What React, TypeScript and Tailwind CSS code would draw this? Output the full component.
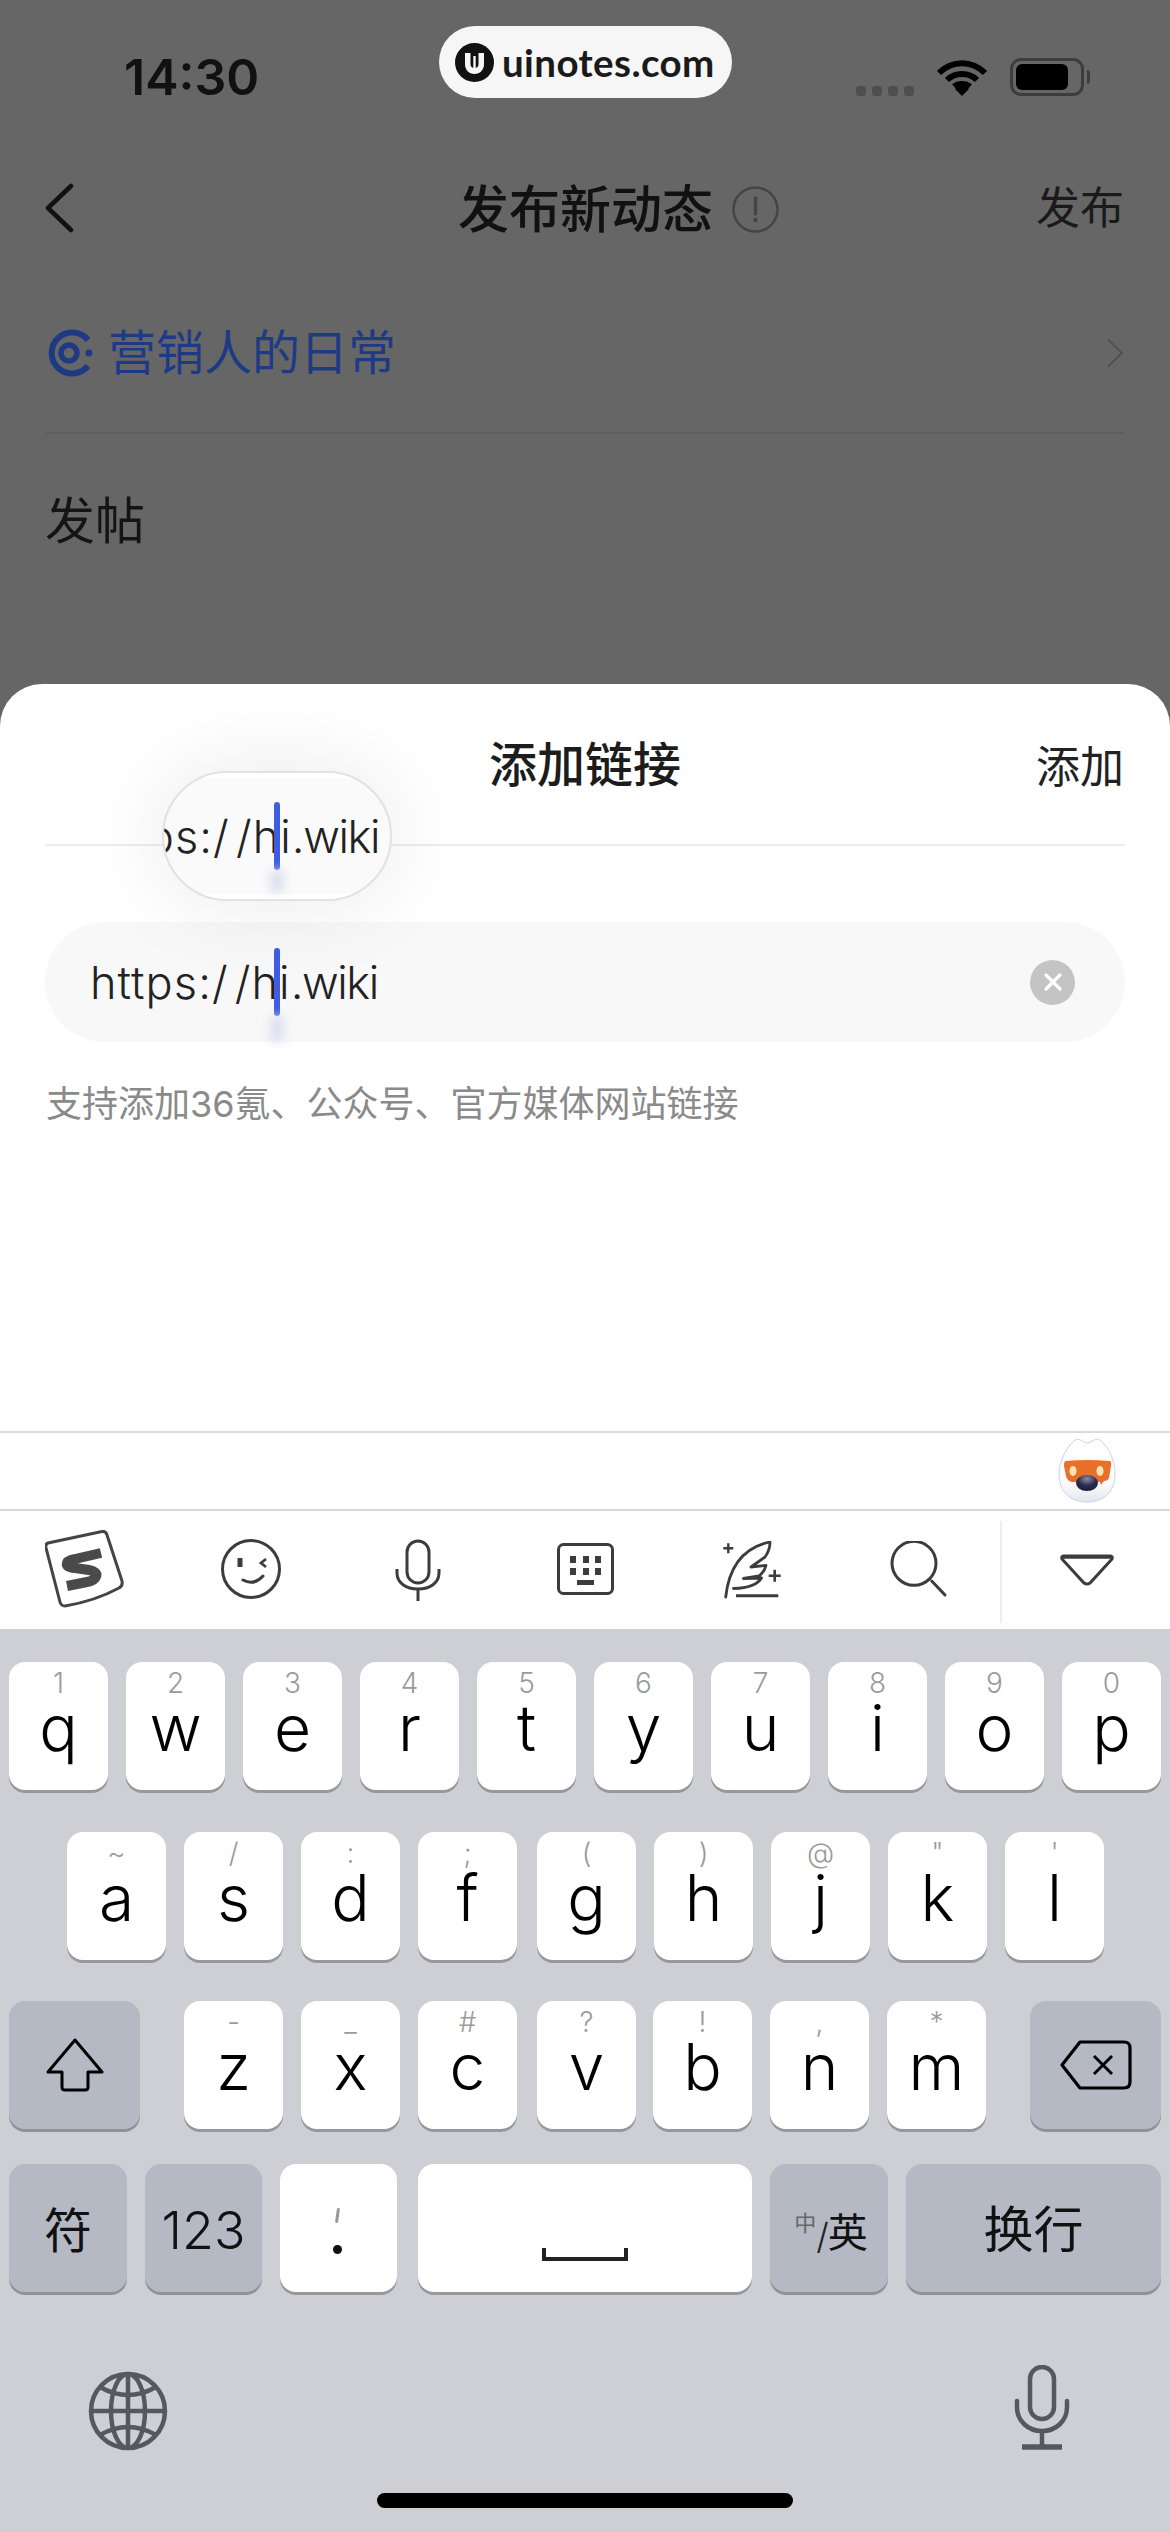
import React from "react";

const CJK = "font-['Inter','Noto_Sans_CJK_SC',sans-serif]";

function Key({ sub, label, className = "" }: { sub?: string; label: string; className?: string }) {
  return (
    <div className={`w-[99px] h-[128px] shrink-0 rounded-[16px] bg-white shadow-[0_3px_0_#96989e] flex flex-col items-center ${className}`}>
      <div className="h-[40px] mt-[1px] leading-[40px] text-[28px] font-light text-[#9a9a9a]">{sub}</div>
      <div className="h-[72px] -mt-[11px] leading-[72px] text-[64px] font-light text-black">{label}</div>
    </div>
  );
}

function GrayKey({ children, className = "" }: { children: React.ReactNode; className?: string }) {
  return (
    <div className={`h-[128px] shrink-0 rounded-[16px] bg-[#b5b9c3] shadow-[0_3px_0_#909298] flex items-center justify-center text-[#111] ${className}`}>
      {children}
    </div>
  );
}

function UrlText() {
  return (
    <span className="text-[45px] font-light leading-none text-[#222] whitespace-pre">
      <span className="tracking-[1.1px]">https:/</span>
      <span className="tracking-[1.1px] ml-[6px]">/hi</span>
      <span className="tracking-[-1.4px]">.wiki</span>
    </span>
  );
}

function Mascot() {
  return (
    <svg width="60" height="68" viewBox="0 0 60 68">
      <defs>
        <radialGradient id="nose" cx="50%" cy="25%" r="75%">
          <stop offset="0%" stopColor="#8a8ea6" />
          <stop offset="55%" stopColor="#2b2d4d" />
          <stop offset="100%" stopColor="#1c1d38" />
        </radialGradient>
        <linearGradient id="body" x1="0" y1="0" x2="0" y2="1">
          <stop offset="0%" stopColor="#ffffff" />
          <stop offset="70%" stopColor="#fbfbfd" />
          <stop offset="100%" stopColor="#e4e6ee" />
        </linearGradient>
      </defs>
      <path d="M19 1 C23 1 26 5 29 5 C33 5 36 1 40 1 C50 6 58 24 57 36 C57 54 46 64 29 64 C12 64 1 54 1 36 C1 24 9 6 19 1Z" fill="url(#body)" stroke="#cfd2e2" strokeWidth="1" />
      <path d="M8 23 Q29 21 51 23 Q54 23 53 28 L51 40 Q50 43 46 43 L43 47 L42 44 L14 44 Q9 43 8 38 L6 28 Q6 23 8 23Z" fill="#e8702a" />
      <ellipse cx="15" cy="33" rx="3.5" ry="5" fill="#fde6b0" />
      <ellipse cx="42" cy="33" rx="3.5" ry="5" fill="#fde6b0" />
      <ellipse cx="29" cy="45" rx="11" ry="8" fill="url(#nose)" />
    </svg>
  );
}

export default function App() {
  return (
    <div className={`relative w-[1170px] h-[2532px] overflow-hidden flex flex-col bg-[#666666] ${CJK}`}>
      {/* dimmed page */}
      <div className="h-[684px] shrink-0 flex flex-col">
        {/* status bar */}
        <div className="relative h-[150px] shrink-0">
          <div className="absolute left-[124px] top-[50px] text-[50px] leading-[54px] font-semibold text-[#111]">14:30</div>
          <div className="absolute left-[439px] top-[26px] w-[293px] h-[72px] rounded-[36px] bg-[#f6f6f6] flex items-center pl-[16px]">
            <svg width="39" height="39" viewBox="0 0 39 39" className="shrink-0">
              <circle cx="19.5" cy="19.5" r="19.5" fill="#111" />
              <path d="M10 10 H15.5 V21 Q15.5 25 19.5 25 Q23.5 25 23.5 21 V10 H29 V21 C29 27 25 31 19.5 31 C14 31 10 27 10 21Z" fill="#f6f6f6" />
              <path d="M18.3 13 H20.7 V26 H18.3Z" fill="#f6f6f6" />
            </svg>
            <span className="ml-[8px] text-[38.5px] leading-none font-bold text-[#1a1a1a] font-['Lato',sans-serif] tracking-[0.4px]">uinotes.com</span>
          </div>
          <div className="absolute left-[856px] top-[86px] flex gap-[6px]">
            {[0, 1, 2, 3].map((i) => (
              <div key={i} className="w-[10px] h-[10px] rounded-[3px] bg-[#4e4e4e]" />
            ))}
          </div>
          <svg className="absolute left-[937px] top-[59px]" width="50" height="37" viewBox="0 0 50 37">
            <g fill="none" stroke="#000" strokeWidth="6">
              <path d="M2 14 C15 1 35 1 48 14" />
              <path d="M10 21 C18 13 32 13 40 21" />
              <path d="M17 27.5 C21 24 29 24 33 27.5" />
            </g>
            <path d="M25 37 L18 30 C21 27 29 27 32 30Z" fill="#000" />
          </svg>
          <div className="absolute left-[1010px] top-[58px] w-[74px] h-[38px] rounded-[11px] border-[3px] border-[#3d3d3d] p-[3px]">
            <div className="w-[52px] h-full rounded-[6px] bg-black" />
          </div>
          <div className="absolute left-[1087px] top-[70px] w-[3px] h-[14px] rounded-r-[3px] bg-[#3d3d3d]" />
        </div>

        {/* nav */}
        <div className="relative h-[118px] shrink-0 flex items-center justify-center">
          <svg className="absolute left-[44px] top-[33px]" width="30" height="50" viewBox="0 0 30 50">
            <path d="M27 3 L4 25 L27 47" fill="none" stroke="#111" strokeWidth="4.5" strokeLinecap="round" strokeLinejoin="round" />
          </svg>
          <div className="absolute left-[458px] top-[30px] text-[51px] leading-[60px] font-medium text-[#111] whitespace-nowrap">发布新动态</div>
          <svg className="absolute left-[732px] top-[36px]" width="47" height="47" viewBox="0 0 47 47">
            <circle cx="23.5" cy="23.5" r="22" fill="none" stroke="#454545" strokeWidth="2.5" />
            <path d="M23.5 12 V28" stroke="#454545" strokeWidth="3.5" strokeLinecap="round" />
            <circle cx="23.5" cy="34" r="2.2" fill="#454545" />
          </svg>
          <div className="absolute left-[1036px] top-[30px] text-[44px] leading-[56px] text-[#1a1a1a] whitespace-nowrap">发布</div>
        </div>

        {/* circle row */}
        <div className="mx-[46px] h-[166px] shrink-0 flex items-center border-b-2 border-[#5d5d5d] pt-[6px]">
          <div className="flex items-center gap-[13px]">
            <svg width="48" height="48" viewBox="0 0 48 48" className="ml-[1px]">
              <path d="M41 11 A20.5 20.5 0 1 0 41 37" fill="none" stroke="#1f3a85" strokeWidth="6" strokeLinecap="butt" />
              <circle cx="22" cy="24" r="8" fill="none" stroke="#1f3a85" strokeWidth="5.5" />
              <circle cx="42" cy="24" r="3.5" fill="#1f3a85" />
            </svg>
            <span className="text-[48px] leading-[56px] text-[#1f3a85] whitespace-nowrap">营销人的日常</span>
          </div>
          <svg className="ml-auto" width="18" height="30" viewBox="0 0 18 30">
            <path d="M2 1.5 L16 15 L2 28.5" fill="none" stroke="#505050" strokeWidth="2" />
          </svg>
        </div>

        <div className="mx-[45px] mt-[56px] text-[50px] leading-[62px] text-[#141414]">发帖</div>
      </div>

      {/* sheet */}
      <div className="relative h-[945px] shrink-0 bg-white rounded-t-[42px] flex flex-col">
        <div className="mx-[45px] h-[162px] shrink-0 relative flex border-b-2 border-[#ececec]">
          <div className="absolute left-0 right-0 top-[51px] text-center text-[48px] leading-[60px] font-medium text-[#1c1c1c]">添加链接</div>
          <div className="absolute right-[1px] top-[55px] text-[44px] leading-[56px] text-[#222]">添加</div>
        </div>

        <div className="mx-[45px] mt-[76px] h-[120px] shrink-0 rounded-[60px] bg-[#f8f8f8] flex items-center pl-[45px] pr-[50px]">
          <UrlText />
          <div className="ml-auto w-[45px] h-[45px] rounded-full bg-[#c4c4c4] flex items-center justify-center">
            <svg width="22" height="22" viewBox="0 0 22 22">
              <path d="M4 4 L18 18 M18 4 L4 18" stroke="#fff" strokeWidth="3.2" strokeLinecap="round" />
            </svg>
          </div>
        </div>

        <div className="mx-[46px] mt-[40px] text-[36px] leading-[44px] text-[#8a8a8a] whitespace-nowrap">支持添加36氪、公众号、官方媒体网站链接</div>

        {/* caret in field */}
        <div className="absolute left-[274px] top-[264px] w-[6px] h-[68px] rounded-[3px] bg-[#3f5de2]" />
        <div className="absolute left-[270px] top-[332px] w-[14px] h-[26px] bg-[#dde1f0] blur-[5px]" />

        {/* magnifier */}
        <div className="absolute left-[162px] top-[87px] w-[230px] h-[130px] rounded-[65px] bg-[#fafafa] border-2 border-[#e2e2e2] shadow-[0_0_90px_rgba(0,0,0,0.09)] overflow-hidden flex items-center justify-end pr-[11px] pt-[1px]">
          <div className="absolute inset-x-0 top-0 h-[5px] bg-white" />
          <div className="absolute inset-x-0 bottom-0 h-[5px] bg-white" />
          <UrlText />
          <div className="absolute left-[110px] top-[29px] w-[6px] h-[68px] rounded-[3px] bg-[#3f5de2]" />
          <div className="absolute left-[106px] top-[97px] w-[14px] h-[22px] bg-[#dde1f0] blur-[5px]" />
        </div>

        {/* candidate bar */}
        <div className="mt-auto h-[78px] shrink-0 border-t-2 border-[#d9d9d9] relative">
          <div className="absolute left-[1058px] top-[5px]"><Mascot /></div>
        </div>

        {/* toolbar */}
        <div className="relative h-[120px] shrink-0 border-t-2 border-[#d9d9d9]">
          <svg className="absolute left-[45px] top-[19px]" width="80" height="80" viewBox="0 0 80 80">
            <path d="M3 13 L57 1.5 Q61 1 62 5 L77 51 Q78 56 74 58 Q50 71 20 76 Q16 76 15 72 L1 18 Q0 14 3 13Z" fill="#fff" stroke="#444" strokeWidth="3" strokeLinejoin="round" />
            <path d="M56 23 L30 29 C19 31 19 37 30 38 L44 40 C56 42 52 50 42 52 L22 56" fill="none" stroke="#4a4a4a" strokeWidth="10" strokeLinejoin="round" />
          </svg>
          <svg className="absolute left-[221px] top-[28px]" width="62" height="62" viewBox="0 0 62 62">
            <circle cx="30" cy="30" r="28.5" fill="none" stroke="#3c3c3c" strokeWidth="3" />
            <path d="M16.5 19 H21.5 V28 H16.5Z" fill="#3c3c3c" />
            <path d="M45 20 L40 24 L45 28" fill="none" stroke="#3c3c3c" strokeWidth="2.8" />
            <path d="M22 41 Q33 47 42 37" fill="none" stroke="#3c3c3c" strokeWidth="3" strokeLinecap="round" />
          </svg>
          <svg className="absolute left-[395px] top-[28px]" width="46" height="62" viewBox="0 0 46 62">
            <rect x="12" y="2" width="22" height="42" rx="11" fill="none" stroke="#3c3c3c" strokeWidth="3" />
            <path d="M2 30 V34 C2 44 11 50 23 50 C35 50 44 44 44 34 V30" fill="none" stroke="#3c3c3c" strokeWidth="3" />
            <path d="M23 50 V62" stroke="#3c3c3c" strokeWidth="3" />
          </svg>
          <svg className="absolute left-[557px] top-[32px]" width="57" height="52" viewBox="0 0 57 52">
            <rect x="1.5" y="1.5" width="54" height="49" rx="5" fill="none" stroke="#3c3c3c" strokeWidth="3" />
            <path d="M13 13h6v7h-6z M26 13h6v7h-6z M38 13h6v7h-6z M13 25h6v7h-6z M26 25h6v7h-6z M38 25h6v7h-6z M20 37h17v5h-17z" fill="#3c3c3c" />
          </svg>
          <svg className="absolute left-[721px] top-[30px]" width="62" height="60" viewBox="0 0 62 60">
            <path d="M4.7 56 C7 35 16 8 49 1 C49 8 47 12 44 16 L30 26 L45 24.5 C44 29 42 32 38 35 L22.5 37.5 L40.5 37 C37 43 30 47 12.5 47.5" fill="none" stroke="#3c3c3c" strokeWidth="2.8" strokeLinejoin="round" strokeLinecap="round" />
            <path d="M15 54.7 H57.3" stroke="#3c3c3c" strokeWidth="3" />
            <path d="M53.7 28.7 V40.7 M47.7 34.7 H59.7" stroke="#3c3c3c" strokeWidth="2.6" />
            <path d="M7.3 2.3 V12.3 M2.3 7.3 H12.3" stroke="#3c3c3c" strokeWidth="2.4" />
          </svg>
          <svg className="absolute left-[890px] top-[30px]" width="58" height="58" viewBox="0 0 58 58">
            <circle cx="24" cy="22.3" r="22" fill="none" stroke="#3c3c3c" strokeWidth="3" />
            <path d="M41.7 40 L55 54" stroke="#3c3c3c" strokeWidth="3" strokeLinecap="round" />
          </svg>
          <div className="absolute left-[1000px] top-[10px] w-[2px] h-[102px] bg-[#eeeeee]" />
          <svg className="absolute left-[1060px] top-[43px]" width="54" height="32" viewBox="0 0 54 32">
            <path d="M4 2 H50 Q53 2 52 5 L30 29 Q27 31 24 29 L2 5 Q1 2 4 2Z" fill="none" stroke="#3c3c3c" strokeWidth="3" />
            <path d="M3 3 H51" stroke="#3c3c3c" strokeWidth="3.5" />
          </svg>
        </div>
      </div>

      {/* keyboard */}
      <div className="flex-1 bg-[#cdcfd5] flex flex-col relative">
        <div className="mt-[33px] px-[9px] flex gap-[18px]">
          {["1q", "2w", "3e", "4r", "5t", "6y", "7u", "8i", "9o", "0p"].map((k) => (
            <Key key={k} sub={k[0]} label={k[1]} />
          ))}
        </div>
        <div className="mt-[42px] pl-[67px] flex gap-[18px]">
          <Key sub="~" label="a" />
          <Key sub="/" label="s" />
          <Key sub=":" label="d" />
          <Key sub=";" label="f" />
          <Key sub="(" label="g" className="ml-[2px]" />
          <Key sub=")" label="h" />
          <Key sub="@" label="j" />
          <Key sub={'"'} label="k" />
          <Key sub="'" label="l" />
        </div>
        <div className="mt-[41px] px-[9px] flex justify-between">
          <GrayKey className="w-[131px]">
            <svg width="58" height="54" viewBox="0 0 58 54">
              <path d="M29 2 L56 34 H42 V49 Q42 52 39 52 H19 Q16 52 16 49 V34 H2Z" fill="none" stroke="#000" strokeWidth="3" strokeLinejoin="round" />
            </svg>
          </GrayKey>
          <div className="flex gap-[18px]">
            <Key sub="-" label="z" />
            <Key sub="_" label="x" />
            <Key sub="#" label="c" />
            <Key sub="?" label="v" className="ml-[2px]" />
            <Key sub="!" label="b" className="-ml-[1px]" />
            <Key sub="," label="n" />
            <Key sub="*" label="m" />
          </div>
          <GrayKey className="w-[131px]">
            <svg width="72" height="50" viewBox="0 0 72 50">
              <path d="M20 2 H64 Q70 2 70 8 V42 Q70 48 64 48 H20 L2 25Z" fill="none" stroke="#000" strokeWidth="3.2" strokeLinejoin="round" />
              <path d="M34 16 L52 34 M52 16 L34 34" stroke="#000" strokeWidth="3" />
            </svg>
          </GrayKey>
        </div>
        <div className="mt-[35px] px-[9px] flex gap-[18px]">
          <GrayKey className="w-[118px] text-[48px] pt-[5px]">符</GrayKey>
          <GrayKey className="w-[117px] text-[52px] font-light pt-[5px]">123</GrayKey>
          <div className="w-[117px] h-[128px] shrink-0 rounded-[16px] bg-white shadow-[0_3px_0_#96989e] relative">
            <span className="absolute left-[56px] top-[44px] w-[3px] h-[15px] bg-[#999] rotate-[8deg] rounded-[2px]" />
            <span className="absolute left-[53px] top-[81px] w-[9px] h-[9px] rounded-full bg-[#111]" />
          </div>
          <div className="w-[334px] h-[128px] ml-[3px] shrink-0 rounded-[16px] bg-white shadow-[0_3px_0_#96989e] flex justify-center pt-[84px]">
            <div className="w-[86px] h-[13px] border-x-[4px] border-b-[4px] border-[#222]" />
          </div>
          <GrayKey className="w-[118px] items-start">
            <div className="flex items-end mt-[44px] ml-[4px]">
              <span className="text-[22px] leading-[26px] text-[#666] mb-[22px]">中</span>
              <span className="text-[36px] leading-[44px] font-light text-[#222]">/</span>
              <span className="text-[40px] leading-[50px] -ml-[1px] text-[#111]">英</span>
            </div>
          </GrayKey>
          <GrayKey className="flex-1 text-[50px] pt-[5px]">换行</GrayKey>
        </div>

        {/* bottom icons */}
        <div className="mt-[73px] pl-[88px] pr-[100px] flex justify-between items-center">
          <svg width="80" height="80" viewBox="0 0 80 80" className="mt-[6px]">
            <g fill="none" stroke="#55585e" strokeWidth="4.5">
              <circle cx="40" cy="40" r="37" />
              <ellipse cx="40" cy="40" rx="17" ry="37" />
              <path d="M40 3 V77 M3 40 H77" />
              <path d="M12 16 Q40 32 68 16 M12 64 Q40 48 68 64" />
            </g>
          </svg>
          <svg width="56" height="86" viewBox="0 0 56 86">
            <rect x="16" y="2" width="24" height="52" rx="12" fill="none" stroke="#55585e" strokeWidth="4.5" />
            <path d="M3 36 V42 C3 56 14 66 28 66 C42 66 53 56 53 42 V36" fill="none" stroke="#55585e" strokeWidth="4.5" strokeLinecap="round" />
            <path d="M28 66 V82" stroke="#55585e" strokeWidth="4.5" />
            <path d="M8 82 H48" stroke="#55585e" strokeWidth="5.5" />
          </svg>
        </div>

        <div className="absolute left-[377px] top-[864px] w-[416px] h-[15px] rounded-full bg-black" />
      </div>
    </div>
  );
}
